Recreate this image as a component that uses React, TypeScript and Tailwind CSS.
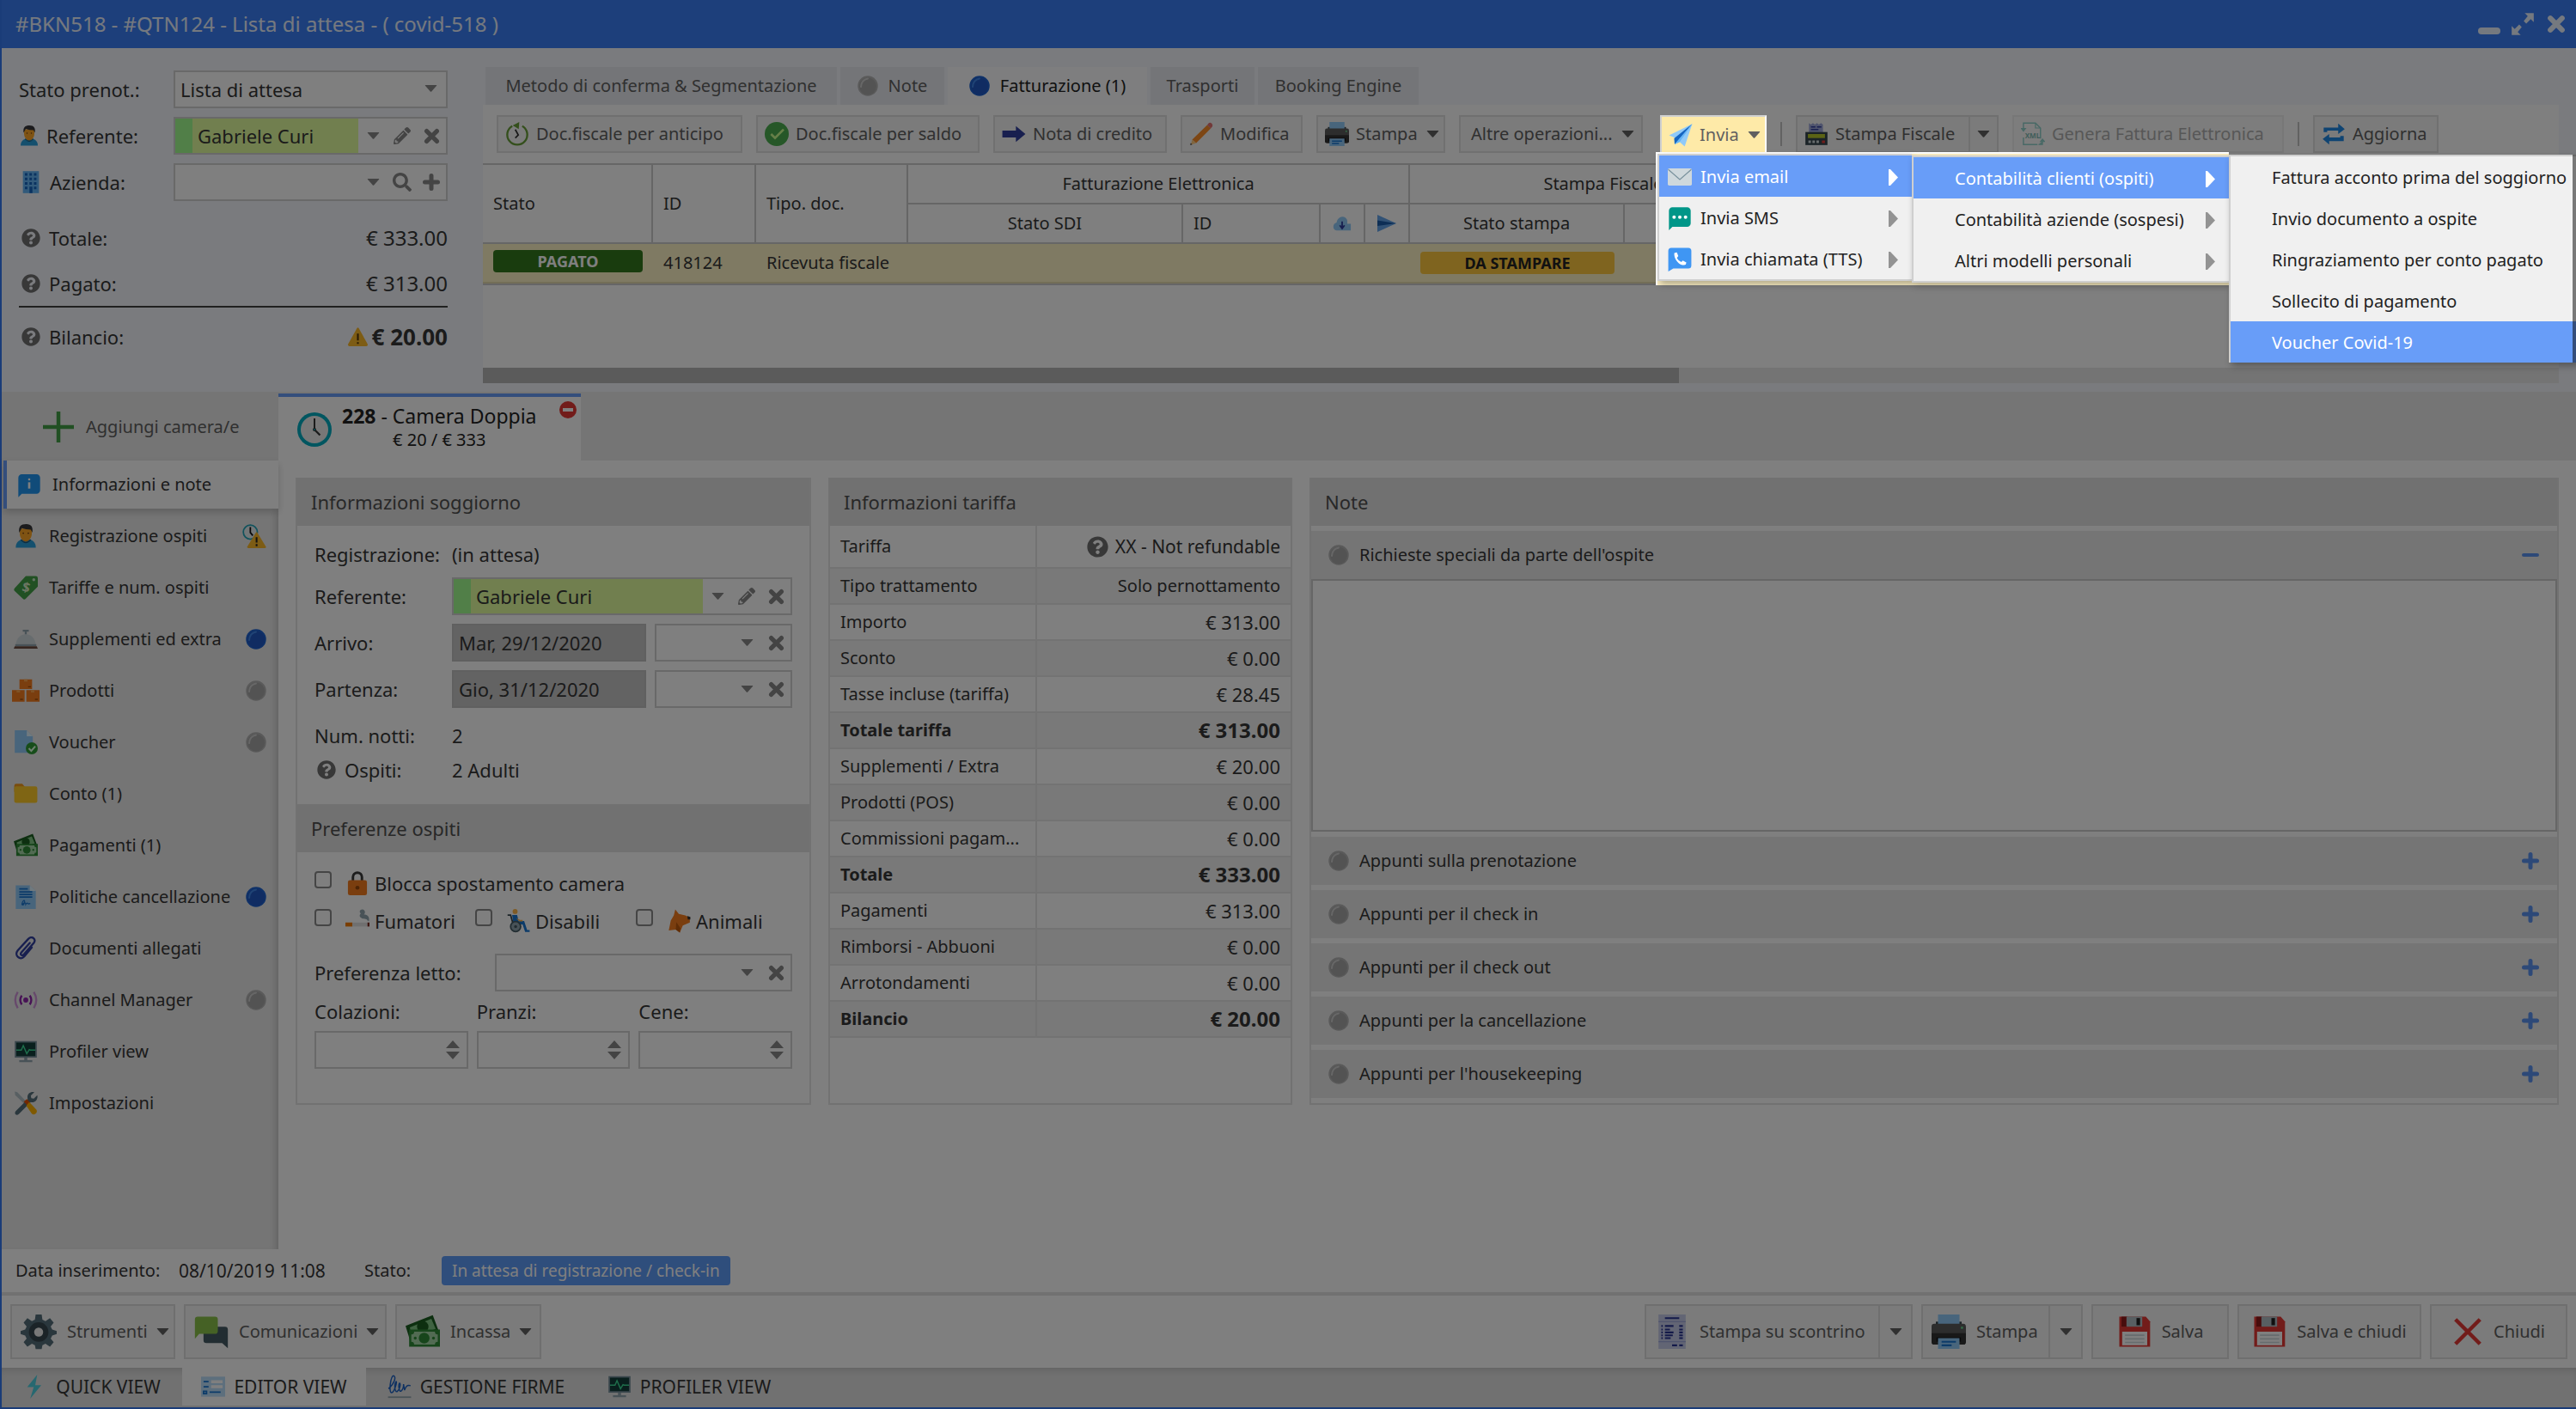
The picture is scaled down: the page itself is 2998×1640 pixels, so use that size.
import type { ReactNode } from 'react'
import clsx from 'clsx'
import { FaPencilAlt, FaQuestionCircle, FaSearch } from 'react-icons/fa'
import { FcAbout, FcClock, FcOk, FcSms } from 'react-icons/fc'

interface SvgProps {
  className?: string
  children: ReactNode
}

function Svg({ className = 'size-7', children }: SvgProps) {
  return (
    <svg viewBox="0 0 48 48" className={clsx('shrink-0', className)} aria-hidden="true">
      {children}
    </svg>
  )
}

interface IconProps {
  className?: string
}

function Caret({ className = 'text-[#606060]' }: IconProps) {
  return (
    <svg viewBox="0 0 16 9" className={clsx('h-[8px] w-[15px] shrink-0', className)} aria-hidden="true">
      <path d="M1 0h14q1 0 .4 .8L8.8 8.3q-.8 .8-1.600 0L.6 .8Q0 0 1 0z" fill="currentColor" />
    </svg>
  )
}

function Spinner() {
  return (
    <svg viewBox="0 0 16 22" className="h-[22px] w-4 shrink-0 text-[#888]" aria-hidden="true">
      <path d="M8 0l8 9H0zM0 13h16l-8 9z" fill="currentColor" />
    </svg>
  )
}

function TimesIcon({ className = 'size-[19px]' }: IconProps) {
  return (
    <Svg className={className}>
      <path d="M9 9l30 30M39 9L9 39" stroke="currentColor" strokeWidth="13" strokeLinecap="round" />
    </Svg>
  )
}

function PlusIcon({ className = 'size-5' }: IconProps) {
  return (
    <Svg className={className}>
      <path d="M24 6v36M6 24h36" stroke="currentColor" strokeWidth="12" strokeLinecap="round" />
    </Svg>
  )
}

function MinusIcon({ className = 'size-5' }: IconProps) {
  return (
    <Svg className={className}>
      <path d="M5 24h38" stroke="currentColor" strokeWidth="10" strokeLinecap="round" />
    </Svg>
  )
}

function Dot({ active, className = 'size-6' }: { active?: boolean; className?: string }) {
  return (
    <Svg className={className}>
      <circle cx="24" cy="24" r="23.500" fill={active ? '#1e62d0' : '#b4b4b4'} />
      <circle cx="24" cy="25" r="20" fill={active ? '#2159c4' : '#a6a6a6'} />
      <path d="M8 26Q9 10 24 7" stroke={active ? '#3f87ea' : '#cfcfcf'} strokeWidth="4" strokeLinecap="round" fill="none" />
    </Svg>
  )
}

function UserIcon({ className }: IconProps) {
  return (
    <Svg className={className}>
      <path d="M4 47c0-11 7-15 13-16h14c6 1 13 5 13 16z" fill="#2ba0dc" />
      <path d="M16 30q8 10 16 0l-2-5H18z" fill="#f57c00" />
      <path d="M14 31q10 12 20 0" stroke="#1d5b80" strokeWidth="2" fill="none" />
      <path d="M12 9h24v10c0 8-5 15-12 15s-12-7-12-15z" fill="#ffa726" />
      <path d="M11 17C9 5 14 0 25 0c10 0 14 6 12 17l-3-6q-10 0-18-3z" fill="#37373a" />
      <circle cx="19" cy="18" r="1.500" fill="#6b3b12" />
      <circle cx="29" cy="18" r="1.500" fill="#6b3b12" />
    </Svg>
  )
}

function BuildingIcon() {
  return (
    <Svg>
      <path d="M8 2h32v44H8z" fill="#64b5f6" />
      <path d="M12 6h5v5h-5zm9 0h5v5h-5zm9 0h5v5h-5zM12 15h5v5h-5zm9 0h5v5h-5zm9 0h5v5h-5zM12 24h5v5h-5zm9 0h5v5h-5zm9 0h5v5h-5zM12 33h5v5h-5zm18 0h5v5h-5zm-9 0h6v13h-6z" fill="#1565c0" />
    </Svg>
  )
}

function WarningIcon({ className }: IconProps) {
  return (
    <Svg className={className}>
      <path d="M22 4q2-3 4 0l20 36q1 4-3 4H5q-4 0-3-4z" fill="#fbb829" />
      <path d="M24 16v15M24 35v4" stroke="#4e3308" strokeWidth="4" />
    </Svg>
  )
}

function GuestClockIcon() {
  return (
    <Svg className="size-7">
      <circle cx="16" cy="16" r="14" fill="#e6eef0" stroke="#22a5b8" strokeWidth="3" />
      <path d="M16 6v11l5 6" stroke="#111" strokeWidth="3" fill="none" />
      <path d="M27 17q1.500-2 3 0l17 28q1 3-2 3H12q-3 0-2-3z" fill="#fbb829" />
      <path d="M28.500 26v11M28.500 40v4" stroke="#222" strokeWidth="3.500" />
    </Svg>
  )
}

function TagIcon() {
  return (
    <Svg>
      <path d="M24 1h20q4 0 4 4v17L24 46q-3 3-6 0L2 31q-3-3 0-6z" fill="#43a047" />
      <circle cx="40" cy="8" r="3" fill="#c8e6c9" />
      <text x="17" y="33" fontSize="27" fontWeight="bold" fill="#dcedc8" transform="rotate(14 24 24)">$</text>
    </Svg>
  )
}

function BellIcon() {
  return (
    <Svg>
      <path d="M18 5h12v4h-4v6h-4V9h-4z" fill="#90a4ae" />
      <path d="M4 36C5 21 14 14 24 14s19 7 20 22z" fill="#cfd8dc" />
      <path d="M3 34h42v4H3z" fill="#90a4ae" />
      <path d="M2 38h44l2 5H0z" fill="#6d4c41" />
    </Svg>
  )
}

function BoxesIcon() {
  return (
    <Svg className="size-8">
      <path d="M13 4h22v17H13zM0 23h22v20H0zm25 0h23v20H25z" fill="#f57c1f" />
      <path d="M21 4h6v4h-6zM8 23h6v4H8zm25 0h6v4h-6z" fill="#ffa74f" />
      <path d="M28 16h5v2h-5zM14 38h5v2h-5zm26 0h5v2h-5z" fill="#a34f0b" />
    </Svg>
  )
}

function VoucherIcon() {
  return (
    <Svg>
      <path d="M2 0h24l12 12v33H2z" fill="#90caf9" />
      <path d="M26 0l12 12H26z" fill="#e1f5fe" />
      <circle cx="36" cy="36" r="12" fill="#2e9b34" />
      <path d="M30 36l5 5 8-9" stroke="#dcffe0" strokeWidth="3.500" fill="none" />
    </Svg>
  )
}

function FolderIcon() {
  return (
    <Svg>
      <path d="M1 20V8q0-4 4-4h12l5 6v10z" fill="#f29a1d" />
      <rect x="1" y="9" width="46" height="33" rx="4" fill="#ffca28" />
    </Svg>
  )
}

function CashIcon({ className }: IconProps) {
  return (
    <Svg className={className}>
      <path d="M0 16L38 1l9 24L8 42z" fill="#1b5e20" />
      <path d="M6 18l30-12 6 14L9 32z" fill="#81c784" />
      <circle cx="24" cy="17" r="8" fill="#1b5e20" />
      <path d="M5 21h43v24H5z" fill="#2e8b36" />
      <path d="M12 24h29q0 4 4 4v10q-4 0-4 4H12q0-4-4-4V28q4 0 4-4z" fill="#a5d6a7" />
      <circle cx="26" cy="33" r="7.500" fill="#2e8b36" />
      <circle cx="13.500" cy="33" r="2" fill="#2e8b36" />
      <circle cx="39" cy="33" r="2" fill="#2e8b36" />
    </Svg>
  )
}

function PolicyIcon() {
  return (
    <Svg>
      <path d="M4 1h28l12 11v36H4z" fill="#90caf9" />
      <path d="M32 1l12 11H32z" fill="#e1f5fe" />
      <path d="M11 8h17M11 14h26M11 19h26M11 24h26" stroke="#1976d2" strokeWidth="3" />
      <path d="M16 40c2-12 8-11 5-3-2 5-5 3-3 1 4-4 6-3 6 1 3-5 4-2 5-1l4-1" stroke="#1976d2" strokeWidth="2" fill="none" />
    </Svg>
  )
}

function ClipIcon() {
  return (
    <Svg>
      <path d="M32 13L15 32c-3 4 2 8 5 4l20-23c6-8-4-15-11-8L8 28c-8 10 5 21 13 12l15-18" stroke="#303f9f" strokeWidth="4" strokeLinecap="round" fill="none" />
    </Svg>
  )
}

function ChannelIcon() {
  return (
    <Svg>
      <circle cx="24" cy="24" r="5" fill="#8e24aa" />
      <path d="M16 15q-6 9 0 18M32 15q6 9 0 18" stroke="#8e24aa" strokeWidth="4" fill="none" />
      <path d="M8 8q-10 16 0 32M40 8q10 16 0 32" stroke="#ce93d8" strokeWidth="4" fill="none" />
    </Svg>
  )
}

function MonitorIcon() {
  return (
    <Svg>
      <path d="M2 3h44v33H2z" fill="#78909c" />
      <path d="M5 6h38v27H5z" fill="#123f3a" />
      <path d="M5 21h10l4-9 7 16 5-8 2 1h10" stroke="#3ddc97" strokeWidth="2.500" fill="none" />
      <path d="M21 36h6v5h10v4H11v-4h10z" fill="#90a4ae" />
    </Svg>
  )
}

function ToolsIcon() {
  return (
    <Svg>
      <path d="M2 1l5 1 19 20-4 4L3 8z" fill="#b0bec5" />
      <path d="M4 40l24-24C25 6 33 0 41 2l-7 7 1 5 5 1 7-7c2 9-5 16-13 14L10 46c-5 4-10-1-6-6z" fill="#546e7a" />
      <path d="M20 21l6-5 7 7-5 6z" fill="#e65100" />
      <path d="M25 29l6-7 14 15c4 6-4 13-9 8z" fill="#ffb300" />
    </Svg>
  )
}

function GearIcon() {
  return (
    <Svg className="size-[42px]">
      <path
        d="M20 1h8l1 7 4 2 6-4 5 6-4 5 2 4 6 2v4l-6 2-2 4 4 5-5 6-6-4-4 2-1 5h-8l-1-5-4-2-6 4-5-6 4-5-2-4-6-2v-4l6-2 2-4-4-5 5-6 6 4 4-2z"
        fill="#546e7a"
      />
      <circle cx="24" cy="24.500" r="13" fill="#37474f" />
      <circle cx="24" cy="24.500" r="6" fill="#f0f0f0" />
    </Svg>
  )
}

function PrinterIcon({ className }: IconProps) {
  return (
    <Svg className={className}>
      <path d="M6 10h36v10H6z" fill="#37474f" />
      <path d="M9 0h30v15H9z" fill="#90caf9" />
      <path d="M4 13h40q4 0 4 4v21q0 4-4 4H4q-4 0-4-4V17q0-4 4-4z" fill="#5a5a5a" />
      <path d="M0 26h48v12q0 4-4 4H4q-4 0-4-4z" fill="#333" />
      <path d="M7 32h34v6H7z" fill="#111" />
      <path d="M9 33h30v15H9z" fill="#90caf9" />
      <path d="M14 38h20M14 43h14" stroke="#1976d2" strokeWidth="2.500" />
      <path d="M41 17h3v3h-3z" fill="#66d38a" />
    </Svg>
  )
}

function RestoreClockIcon() {
  return (
    <Svg>
      <path d="M14 8a20 20 0 1 0 20 0" stroke="#689f38" strokeWidth="4" fill="none" />
      <path d="M15 7l13-7-1 14z" fill="#689f38" />
      <path d="M20 15l6 11-6 6" stroke="#333" strokeWidth="3" fill="none" />
    </Svg>
  )
}

function ArrowIcon() {
  return (
    <Svg>
      <path d="M1 17h27V8l19 16-19 16v-9H1z" fill="#303f9f" />
    </Svg>
  )
}

function PencilIcon() {
  return (
    <Svg>
      <path d="M36 6l7 7-29 29-8-7z" fill="#fb8c28" />
      <path d="M36 6l3-4q3-2 6 1t1 6l-3 4z" fill="#e57373" />
      <path d="M6 35l8 7-11 4z" fill="#ffcc80" />
      <path d="M3 42l3 3-4 1z" fill="#333" />
    </Svg>
  )
}

function PlaneIcon() {
  return (
    <Svg>
      <path d="M1 25L47 2 32 47l-10-9-10 5 1-13z" fill="#90caf9" />
      <path d="M47 2L11 31l1 12z" fill="#1565c0" />
      <path d="M47 2L12 43l10-5z" fill="#64b5f6" />
    </Svg>
  )
}

function FiscalIcon() {
  return (
    <Svg>
      <path d="M9 2l4 3 4-3 4 3 4-3 4 3 4-3 4 3v18H9z" fill="#9fa8da" />
      <path d="M13 10h9M25 10h9M13 15h15" stroke="#303f9f" strokeWidth="2.500" />
      <path d="M2 20h44v26H2z" fill="#37474f" />
      <path d="M7 24h34v8H7z" fill="#b8c92a" />
      <path d="M8 37h5v5H8zm8 0h5v5h-5zm8 0h5v5h-5z" fill="#cfd8dc" />
      <path d="M35 37h6v5h-6z" fill="#e53935" />
    </Svg>
  )
}

function XmlIcon() {
  return (
    <Svg>
      <path d="M5 18V2h24l10 10v21M5 31v14h28" stroke="#26a69a" strokeWidth="2.500" fill="none" />
      <path d="M29 2v10h10" stroke="#26a69a" strokeWidth="2" fill="none" />
      <path d="M1 13l4 5 4-5zM39 39l4-5 4 5zM43 38v7h-8" stroke="#26a69a" strokeWidth="2" fill="#26a69a" />
      <text x="8" y="32" fontSize="14" fontWeight="bold" fill="#00796b">XML</text>
    </Svg>
  )
}

function RefreshIcon() {
  return (
    <Svg>
      <path d="M4 20V11h29V3l13 11-13 10v-7H11v3z" fill="#1e88e5" />
      <path d="M44 28v10H15v7L2 34l13-10v7h22v-3z" fill="#1e88e5" />
    </Svg>
  )
}

function CloudIcon() {
  return (
    <Svg className="size-[22px]">
      <path d="M10 42C-2 40 0 24 10 22 12 4 34 2 37 17v8h9v17z" fill="#90caf9" />
      <path d="M24 19v16M18 29l6 8 6-8" stroke="#303f9f" strokeWidth="4" fill="none" />
    </Svg>
  )
}

function SendIcon() {
  return (
    <Svg className="size-6">
      <path d="M2 4l44 20L2 44z" fill="#64a5ea" />
      <path d="M2 17l44 7-44 6z" fill="#1a5cab" />
    </Svg>
  )
}

function EnvelopeIcon() {
  return (
    <Svg>
      <rect x="0" y="7" width="48" height="34" rx="3" fill="#cfd8dc" />
      <path d="M1 9l23 20L47 9" stroke="#78909c" strokeWidth="2" fill="none" />
    </Svg>
  )
}

function CallIcon() {
  return (
    <Svg>
      <path d="M37 42H11l-10 6V7q0-6 6-6h34q6 0 6 6v29q0 6-6 6z" fill="#3f96f3" />
      <path d="M13 11l5-1 3 7-3 4q3 6 9 8l3-3 7 4-1 4q-2 2-7 1C19 32 12 21 13 11z" fill="#fff" />
    </Svg>
  )
}

function LockIcon() {
  return (
    <Svg>
      <path d="M15 20v-8c0-12 18-12 18 0v8" stroke="#3b3b3b" strokeWidth="5" fill="none" />
      <rect x="5" y="18" width="38" height="30" rx="4" fill="#f57c1f" />
      <circle cx="24" cy="33" r="4" fill="#9a4a0b" />
    </Svg>
  )
}

function SmokeIcon() {
  return (
    <Svg>
      <path d="M0 27h14v8H0z" fill="#f57c00" />
      <path d="M14 27h30v8H14z" fill="#e0e0e0" />
      <path d="M44 27h4v8h-4z" fill="#7a2d22" />
      <path d="M30 2c7-4 12 4 7 9 9 0 11 6 10 13l-3-1c-1-5-9-2-12-5-6-3-3-8-1-9-3-2-3-5-1-7z" fill="#90a4ae" />
    </Svg>
  )
}

function WheelchairIcon() {
  return (
    <Svg>
      <circle cx="18" cy="5" r="5" fill="#ffb74d" />
      <path d="M12 12h10l3 12h11l6 18h5v4h-9l-5-15H15z" fill="#1976d2" />
      <path d="M3 12h6l5 18" stroke="#37474f" strokeWidth="3" fill="none" />
      <circle cx="19" cy="35" r="10" stroke="#455a64" strokeWidth="3" fill="#90a4ae" />
      <circle cx="19" cy="35" r="3" fill="#455a64" />
      <path d="M20 18l8 4h5v3h-7z" fill="#ffb74d" />
    </Svg>
  )
}

function DogIcon() {
  return (
    <Svg>
      <path d="M17 1l7 9 13 3 9 4v10l-14 6-6 14-8-6-14 2 4-20 6-10z" fill="#f57c1f" />
      <path d="M19 26l8 12-1 9-8-6z" fill="#bf5a0c" />
      <path d="M41 14l6 2v5h-5z" fill="#333" />
    </Svg>
  )
}

function CommentsIcon() {
  return (
    <Svg className="size-10">
      <path d="M17 17h26q4 0 4 4v26l-8-7H17q-4 0-4-4V21q0-4 4-4z" fill="#455a64" />
      <path d="M5 3h24q4 0 4 4v16q0 4-4 4H7l-6 7V7q0-4 4-4z" fill="#8bc34a" />
    </Svg>
  )
}

function ReceiptIcon() {
  return (
    <Svg className="size-10">
      <path d="M5 0h38v48H5z" fill="#c5cae9" />
      <path d="M5 10h38M5 38h38" stroke="#9fa8da" strokeWidth="1.500" />
      <path d="M14 5h20M9 16h2M14 16h12M9 21h2M14 21h7M9 25h2M14 25h12M9 29h2M14 29h11M9 33h2M14 33h8M34 16h5M34 21h5M34 25h5M34 29h5M34 33h5M24 43h7M34 43h5" stroke="#283593" strokeWidth="2.500" />
    </Svg>
  )
}

function DiskIcon() {
  return (
    <Svg className="size-10">
      <path d="M3 3h37l6 7v35H3z" fill="#e53935" />
      <path d="M6 3h8v14H6z" fill="#8e1b1b" />
      <path d="M13 3h22v14H13z" fill="#b0bec5" />
      <path d="M27 5h5v10h-5z" fill="#212121" />
      <path d="M7 24h35v19H7z" fill="#fff" />
      <path d="M11 29h27M11 34h27M11 39h27" stroke="#cfd8dc" strokeWidth="2" />
    </Svg>
  )
}

function CrossIcon() {
  return (
    <Svg className="size-9">
      <path d="M5 5l38 38M43 5L5 43" stroke="#e53935" strokeWidth="6" />
    </Svg>
  )
}

function FlashIcon() {
  return (
    <Svg>
      <path d="M28 0L8 25h13l-7 23 22-27H24z" fill="#4dd0e1" />
    </Svg>
  )
}

function EditorIcon() {
  return (
    <Svg>
      <path d="M0 4h48v40H0z" fill="#bbdefb" />
      <path d="M5 14h10M5 24h10M5 33h6v5H5zM17 35h22" stroke="#1976d2" strokeWidth="3" fill="none" />
      <path d="M20 11h23v6H20zm0 10h23v6H20z" fill="#fff" />
    </Svg>
  )
}

function SignIcon() {
  return (
    <Svg>
      <path d="M2 28C14 18 18 4 12 2 6 3 2 36 8 36c6-1 12-24 9-22-4 5-3 21 2 20 5-3 8-16 5-17-3 3-1 18 3 16 4-3 5-11 5-14l2 12c2-6 4-11 12-9" stroke="#1e63c4" strokeWidth="2.500" fill="none" />
      <path d="M1 45h46" stroke="#90a4ae" strokeWidth="3" />
    </Svg>
  )
}

interface FieldProps {
  id: string
  label: string
  value?: string
  className?: string
  children?: ReactNode
}

function ComboField({ id, label, value = '', className, children }: FieldProps) {
  return (
    <div className={clsx('flex h-11 min-w-0 items-center border-2 border-[#d2d2d2] bg-white', className)}>
      {value && <span className="h-full w-5 shrink-0 bg-[#a2ff90]" />}
      <input
        id={id}
        aria-label={label}
        defaultValue={value}
        className={clsx('h-full w-0 min-w-0 flex-1 px-1.5 outline-none', value && 'bg-[#e2ff9e]')}
      />
      {children}
    </div>
  )
}

function FieldButton({ label, className, children }: { label: string; className?: string; children: ReactNode }) {
  return (
    <button aria-label={label} className={clsx('flex h-full items-center justify-center text-[20px] text-[#888]', className ?? 'w-[34px]')}>
      {children}
    </button>
  )
}

function Help() {
  return <FaQuestionCircle className="size-[22px] shrink-0 text-[#707070]" />
}

const amounts = [
  { label: 'Totale:', value: '€ 333.00' },
  { label: 'Pagato:', value: '€ 313.00' },
]

function BookingSummary() {
  return (
    <div className="w-[560px] shrink-0 pt-[26px] pr-[41px] pl-5 text-[22px] leading-7">
      <div className="flex flex-col gap-2.5">
        <div className="flex h-11 items-center">
          <label htmlFor="stato" className="w-[180px]">Stato prenot.:</label>
          <div className="relative flex-1">
            <select id="stato" className="h-11 w-full appearance-none border-2 border-[#d2d2d2] bg-white pl-1.5">
              <option>Lista di attesa</option>
            </select>
            <Caret className="pointer-events-none absolute top-[17px] right-3 text-[#888]" />
          </div>
        </div>
        <div className="flex h-11 items-center">
          <label htmlFor="referente" className="flex w-[180px] items-center gap-2">
            <UserIcon className="size-6" />Referente:
          </label>
          <ComboField id="referente" label="Referente" value="Gabriele Curi" className="flex-1">
            <FieldButton label="Apri elenco"><Caret className="text-[#888]" /></FieldButton>
            <FieldButton label="Modifica"><FaPencilAlt /></FieldButton>
            <FieldButton label="Rimuovi"><TimesIcon /></FieldButton>
          </ComboField>
        </div>
        <div className="flex h-11 items-center">
          <label htmlFor="azienda" className="flex w-[180px] items-center gap-2">
            <BuildingIcon />Azienda:
          </label>
          <ComboField id="azienda" label="Azienda" className="flex-1">
            <FieldButton label="Apri elenco"><Caret className="text-[#888]" /></FieldButton>
            <FieldButton label="Cerca"><FaSearch className="size-[22px]" /></FieldButton>
            <FieldButton label="Aggiungi"><PlusIcon /></FieldButton>
          </ComboField>
        </div>
      </div>
      <div className="mt-4 border-b-2 border-[#404040]">
        {amounts.map((row) => (
          <div key={row.label} className="flex h-[53px] items-center gap-2.5 pl-[3px]">
            <Help />
            <span className="flex-1">{row.label}</span>
            <span className="text-[24px]">{row.value}</span>
          </div>
        ))}
      </div>
      <div className="flex h-[68px] items-center pl-[3px]">
        <Help />
        <span className="ml-2.5 flex-1">Bilancio:</span>
        <WarningIcon className="mr-1 size-[25px]" />
        <strong className="text-[26px]">€ 20.00</strong>
      </div>
    </div>
  )
}

const headerTabs = [
  { label: 'Metodo di conferma & Segmentazione', width: 'w-[409px]' },
  { label: 'Note', width: 'w-[121px]', dot: true },
  { label: 'Fatturazione (1)', width: 'w-[232px]', dot: true, active: true },
  { label: 'Trasporti', width: 'w-[121px]' },
  { label: 'Booking Engine', width: 'w-[187px]' },
]

interface ToolButtonProps {
  label: string
  width: string
  icon?: ReactNode
  caret?: boolean
  disabled?: boolean
}

function ToolButton({ label, width, icon, caret, disabled }: ToolButtonProps) {
  return (
    <button
      disabled={disabled}
      className={clsx(
        'flex h-11 items-center border-2 border-[#e0e0e0] bg-[#f6f6f6] px-2 whitespace-nowrap text-[#606060] disabled:opacity-50',
        width,
      )}
    >
      {icon && <span className="mr-2 flex w-7 shrink-0 items-center justify-center">{icon}</span>}
      <span className={clsx(!icon && 'pl-1')}>{label}</span>
      {caret && <Caret className="ml-2.5 text-[#606060]" />}
    </button>
  )
}

function Separator() {
  return <span className="h-7 w-[2px] bg-[#c4c4c4]" />
}

const sendMenu = [
  { label: 'Invia email', icon: <EnvelopeIcon />, active: true },
  { label: 'Invia SMS', icon: <FcSms className="size-8" /> },
  { label: 'Invia chiamata (TTS)', icon: <CallIcon /> },
]
const emailMenu = [
  { label: 'Contabilità clienti (ospiti)', active: true },
  { label: 'Contabilità aziende (sospesi)' },
  { label: 'Altri modelli personali' },
]
const modelMenu = [
  { label: 'Fattura acconto prima del soggiorno' },
  { label: 'Invio documento a ospite' },
  { label: 'Ringraziamento per conto pagato' },
  { label: 'Sollecito di pagamento' },
  { label: 'Voucher Covid-19', active: true },
]

interface MenuEntry {
  label: string
  icon?: ReactNode
  active?: boolean
}

function Menu({ items, submenu, className }: { items: MenuEntry[]; submenu?: boolean; className: string }) {
  return (
    <div role="menu" className={clsx('shrink-0 border-[#cfcfcf] bg-[#f0f0f0] shadow-[3px_4px_8px_rgba(0,0,0,0.3)]', className)}>
      {items.map((item) => (
        <button
          key={item.label}
          role="menuitem"
          className={clsx(
            'flex h-12 w-full items-center pt-[2px] pr-4 whitespace-nowrap',
            item.icon ? 'pl-2' : 'pl-12',
            item.active ? 'bg-[#689df8] text-white' : 'text-[#222]',
          )}
        >
          {item.icon && <span className="mr-2 flex w-8 items-center justify-center">{item.icon}</span>}
          <span>{item.label}</span>
          {submenu && (
            <svg viewBox="0 0 11 19" className={clsx('ml-auto h-[19px] w-[11px]', item.active ? 'text-white' : 'text-[#939393]')} aria-hidden="true">
              <path d="M0 0l2 0 9 9.500-9 9.500H0z" fill="currentColor" />
            </svg>
          )}
        </button>
      ))}
    </div>
  )
}

function SendButton() {
  return (
    <div className="relative z-20 ml-1">
      <button className="flex h-11 w-[124px] items-center border-2 border-[#d0d0d0] border-r-white border-b-0 bg-[#feeaa8] px-2 text-[#606060]">
        <span className="mr-2"><PlaneIcon /></span>
        Invia
        <Caret className="ml-2.5" />
      </button>
      {/* open menu chain, kept above the page mask */}
      <div className="absolute top-[43px] left-[-5px] flex w-max items-start">
        <div className="flex items-start border-t-2 border-l-2 border-white bg-[#fdf0c4] pb-[3px]">
          <Menu items={sendMenu} submenu className="z-0 w-[296px] border-t-2 border-b-2 border-l-2" />
          <Menu items={emailMenu} submenu className="z-10 mt-[2px] w-[369px] border-t-2 border-b-2 border-l-2" />
        </div>
        <div className="relative z-20 mt-[3px]">
          <Menu items={modelMenu} className="w-[405px] border-t-2 border-l-2" />
          <span className="absolute inset-y-0 right-0 w-[5px] bg-black/50" />
        </div>
      </div>
    </div>
  )
}

function InvoiceTable() {
  const th = 'border-r-2 border-[#cdcdcd] font-normal'
  return (
    <table className="w-full table-fixed border-separate border-spacing-0 border-y-2 border-[#cdcdcd] text-left">
      <colgroup>
        <col className="w-[198px]" />
        <col className="w-[120px]" />
        <col className="w-[177px]" />
        <col className="w-[320px]" />
        <col className="w-[160px]" />
        <col className="w-[52px]" />
        <col className="w-[52px]" />
        <col className="w-[250px]" />
        <col className="w-[202px]" />
        <col />
      </colgroup>
      <thead>
        <tr className="h-[46px]">
          <th rowSpan={2} className={clsx(th, 'pl-3')}>Stato</th>
          <th rowSpan={2} className={clsx(th, 'pl-3')}>ID</th>
          <th rowSpan={2} className={clsx(th, 'pl-3')}>Tipo. doc.</th>
          <th colSpan={4} className={clsx(th, 'border-b-2 text-center')}>Fatturazione Elettronica</th>
          <th colSpan={2} className={clsx(th, 'border-b-2 text-center')}>Stampa Fiscale</th>
          <th rowSpan={2} />
        </tr>
        <tr className="h-[44px]">
          <th className={clsx(th, 'text-center')}>Stato SDI</th>
          <th className={clsx(th, 'pl-3')}>ID</th>
          <th className={th} aria-label="Scarica"><span className="flex justify-center"><CloudIcon /></span></th>
          <th className={th} aria-label="Invia"><span className="flex justify-center"><SendIcon /></span></th>
          <th className={clsx(th, 'text-center')}>Stato stampa</th>
          <th className={th} />
        </tr>
      </thead>
      <tbody>
        <tr className="h-12 bg-[#fef4c6] *:border-t-2 *:border-t-[#cdcdcd] *:border-b-2 *:border-b-[#e6dcae]">
          <td className="px-3 pb-1">
            <span className="block h-[26px] rounded bg-[#32791c] text-center text-[18px] leading-[26px] font-bold text-white">PAGATO</span>
          </td>
          <td className="pl-3">418124</td>
          <td className="pl-3">Ricevuta fiscale</td>
          <td colSpan={4} />
          <td className="px-3">
            <span className="block h-[26px] rounded bg-[#ffc93e] text-center text-[18px] leading-[26px] font-bold text-[#222]">DA STAMPARE</span>
          </td>
          <td colSpan={2} />
        </tr>
      </tbody>
    </table>
  )
}

function InvoicePanel() {
  return (
    <div className="min-w-0 flex-1 pt-[22px]">
      <div role="tablist" className="flex gap-1 pl-[3px]">
        {headerTabs.map((tab) => (
          <button
            key={tab.label}
            role="tab"
            className={clsx(
              'flex h-11 items-center justify-center gap-3 whitespace-nowrap',
              tab.width,
              tab.active ? 'bg-[#fcfdff] text-[#222]' : 'bg-[#e9ebf1] text-[#606060]',
            )}
          >
            {tab.dot && <Dot active={tab.active} />}
            {tab.label}
          </button>
        ))}
      </div>
      <div className="bg-white">
        <div className="flex h-[68px] items-center gap-4 pl-4">
          <ToolButton label="Doc.fiscale per anticipo" icon={<RestoreClockIcon />} width="w-[286px]" />
          <ToolButton label="Doc.fiscale per saldo" icon={<FcOk className="size-8 shrink-0" />} width="w-[260px]" />
          <ToolButton label="Nota di credito" icon={<ArrowIcon />} width="w-[202px]" />
          <ToolButton label="Modifica" icon={<PencilIcon />} width="w-[142px]" />
          <ToolButton label="Stampa" icon={<PrinterIcon />} caret width="w-[150px]" />
          <ToolButton label="Altre operazioni..." caret width="w-[214px]" />
          <SendButton />
          <Separator />
          <div className="flex">
            <ToolButton label="Stampa Fiscale" icon={<FiscalIcon />} width="w-[203px]" />
            <button aria-label="Opzioni stampa fiscale" className="flex h-11 w-[33px] items-center justify-center border-2 border-l-0 border-[#e0e0e0] bg-[#f6f6f6]">
              <Caret />
            </button>
          </div>
          <ToolButton label="Genera Fattura Elettronica" icon={<XmlIcon />} disabled width="w-[316px]" />
          <Separator />
          <ToolButton label="Aggiorna" icon={<RefreshIcon />} width="w-[146px]" />
        </div>
        <InvoiceTable />
        <div className="mt-[96px] h-[18px] bg-[#e9e9e9]">
          <div className="h-full w-[1392px] bg-[#b6b6b6]" />
        </div>
      </div>
    </div>
  )
}

const navItems = [
  { label: 'Informazioni e note', icon: <FcAbout className="size-8" />, active: true },
  { label: 'Registrazione ospiti', icon: <UserIcon />, mark: <GuestClockIcon /> },
  { label: 'Tariffe e num. ospiti', icon: <TagIcon /> },
  { label: 'Supplementi ed extra', icon: <BellIcon />, mark: <Dot active /> },
  { label: 'Prodotti', icon: <BoxesIcon />, mark: <Dot /> },
  { label: 'Voucher', icon: <VoucherIcon />, mark: <Dot /> },
  { label: 'Conto (1)', icon: <FolderIcon /> },
  { label: 'Pagamenti (1)', icon: <CashIcon /> },
  { label: 'Politiche cancellazione', icon: <PolicyIcon />, mark: <Dot active /> },
  { label: 'Documenti allegati', icon: <ClipIcon /> },
  { label: 'Channel Manager', icon: <ChannelIcon />, mark: <Dot /> },
  { label: 'Profiler view', icon: <MonitorIcon /> },
  { label: 'Impostazioni', icon: <ToolsIcon /> },
]

function Sidebar() {
  return (
    <nav className="w-[322px] shrink-0 bg-[#eaeaea] shadow-[inset_-8px_0_8px_-6px_rgba(0,0,0,0.18)]">
      {navItems.map((item) => (
        <a
          key={item.label}
          href="#"
          className={clsx(
            'flex items-center whitespace-nowrap',
            item.active
              ? 'mb-[2px] ml-[2px] h-14 border-l-4 border-[#689df8] bg-white pl-2.5 shadow-[0_4px_8px_rgba(0,0,0,0.18)]'
              : 'h-[60px] pr-3.5 pl-3',
          )}
        >
          <span className="mr-[11px] flex w-8 items-center justify-center">{item.icon}</span>
          <span>{item.label}</span>
          {item.mark && <span className="ml-auto">{item.mark}</span>}
        </a>
      ))}
    </nav>
  )
}

function PanelTitle({ children }: { children: ReactNode }) {
  return <h2 className="flex h-14 items-center bg-[#e2e2e2] px-4 text-[22px] text-[#505050]">{children}</h2>
}

const preferences = [
  { id: 'fumatori', label: 'Fumatori', icon: <SmokeIcon /> },
  { id: 'disabili', label: 'Disabili', icon: <WheelchairIcon /> },
  { id: 'animali', label: 'Animali', icon: <DogIcon /> },
]

const stays = [
  { id: 'arrivo', label: 'Arrivo:', value: 'Mar, 29/12/2020' },
  { id: 'partenza', label: 'Partenza:', value: 'Gio, 31/12/2020' },
]

function CheckOption({ id, label, icon }: { id: string; label: string; icon: ReactNode }) {
  return (
    <div className="flex h-11 w-[187px] shrink-0 items-center whitespace-nowrap">
      <input id={id} type="checkbox" className="mb-2 size-5 shrink-0 appearance-none rounded-[4px] border-2 border-[#8a8a8a] bg-white" />
      <label htmlFor={id} className="flex items-center gap-1.5 pl-4">{icon}{label}</label>
    </div>
  )
}

function StayPanel() {
  return (
    <section className="w-[600px] shrink-0 border-2 border-t-0 border-[#e4e4e4] bg-white text-[22px]">
      <PanelTitle>Informazioni soggiorno</PanelTitle>
      <div className="px-5 pt-2.5 pb-5">
        <div className="mb-1 flex h-[46px] items-center">
          <span className="w-[160px]">Registrazione:</span>
          <span>(in attesa)</span>
        </div>
        <div className="flex flex-col gap-2.5">
          <div className="flex h-11 items-center">
            <label htmlFor="ospite" className="w-[160px]">Referente:</label>
            <ComboField id="ospite" label="Referente soggiorno" value="Gabriele Curi" className="flex-1">
              <FieldButton label="Apri elenco"><Caret className="text-[#888]" /></FieldButton>
              <FieldButton label="Modifica"><FaPencilAlt /></FieldButton>
              <FieldButton label="Rimuovi"><TimesIcon /></FieldButton>
            </ComboField>
          </div>
          {stays.map((stay) => (
            <div key={stay.id} className="flex h-11 items-center">
              <label htmlFor={stay.id} className="w-[160px]">{stay.label}</label>
              <input id={stay.id} readOnly defaultValue={stay.value} className="mr-2.5 h-11 w-[226px] border-2 border-[#c0c0c0] bg-[#c6c6c6] px-1.5" />
              <ComboField id={`${stay.id}-ora`} label={`${stay.label} ora`} className="flex-1">
                <FieldButton label="Apri elenco"><Caret className="text-[#888]" /></FieldButton>
                <FieldButton label="Rimuovi"><TimesIcon /></FieldButton>
              </ComboField>
            </div>
          ))}
        </div>
        <div className="mt-3 flex h-10 items-center">
          <span className="w-[160px]">Num. notti:</span>
          <span>2</span>
        </div>
        <div className="flex h-10 items-center">
          <span className="flex w-[160px] items-center gap-2.5 pl-[3px]"><Help />Ospiti:</span>
          <span>2 Adulti</span>
        </div>
      </div>
      <PanelTitle>Preferenze ospiti</PanelTitle>
      <div className="px-5 pt-3.5 pb-10">
        <CheckOption id="blocca" label="Blocca spostamento camera" icon={<LockIcon />} />
        <div className="flex">
          {preferences.map((option) => (
            <CheckOption key={option.id} {...option} />
          ))}
        </div>
        <div className="mt-4 flex h-11 items-center">
          <label htmlFor="letto" className="w-[210px]">Preferenza letto:</label>
          <ComboField id="letto" label="Preferenza letto" className="flex-1">
            <FieldButton label="Apri elenco"><Caret className="text-[#888]" /></FieldButton>
            <FieldButton label="Rimuovi"><TimesIcon /></FieldButton>
          </ComboField>
        </div>
        <div className="flex gap-2.5">
          {['Colazioni', 'Pranzi', 'Cene'].map((meal) => (
            <div key={meal} className="min-w-0 flex-1">
              <label htmlFor={meal} className="flex h-[46px] items-center">{meal}:</label>
              <div className="flex h-11 items-center border-2 border-[#d2d2d2] bg-white pr-2">
                <input id={meal} inputMode="numeric" className="h-full w-0 flex-1 px-1.5 outline-none" />
                <Spinner />
              </div>
            </div>
          ))}
        </div>
      </div>
    </section>
  )
}

const rates = [
  { label: 'Tipo trattamento', value: 'Solo pernottamento', plain: true },
  { label: 'Importo', value: '€ 313.00' },
  { label: 'Sconto', value: '€ 0.00' },
  { label: 'Tasse incluse (tariffa)', value: '€ 28.45' },
  { label: 'Totale tariffa', value: '€ 313.00', bold: true },
  { label: 'Supplementi / Extra', value: '€ 20.00' },
  { label: 'Prodotti (POS)', value: '€ 0.00' },
  { label: 'Commissioni pagam...', value: '€ 0.00' },
  { label: 'Totale', value: '€ 333.00', bold: true },
  { label: 'Pagamenti', value: '€ 313.00' },
  { label: 'Rimborsi - Abbuoni', value: '€ 0.00' },
  { label: 'Arrotondamenti', value: '€ 0.00' },
  { label: 'Bilancio', value: '€ 20.00', bold: true },
]

function RatePanel() {
  return (
    <section className="w-[540px] shrink-0 border-2 border-t-0 border-[#e4e4e4] bg-white">
      <PanelTitle>Informazioni tariffa</PanelTitle>
      <table className="w-full border-separate border-spacing-0 *:*:*:border-b-2 *:*:*:border-[#e6e6e6]">
        <tbody>
          <tr className="h-[50px]">
            <td className="w-[241px] border-r-2 pl-3">Tariffa</td>
            <td className="pr-3">
              <span className="flex items-center justify-end gap-2">
                <FaQuestionCircle className="size-[25px] text-[#707070]" />
                <span className="text-[21px]">XX - Not refundable</span>
              </span>
            </td>
          </tr>
          {rates.map((rate, index) => (
            <tr key={rate.label} className={clsx('h-[42px]', index % 2 === 0 && 'bg-[#f2f2f2]', rate.bold && 'font-bold')}>
              <td className="border-r-2 pl-3">{rate.label}</td>
              <td className={clsx('pr-3 text-right', !rate.plain && (rate.bold ? 'text-[24px]' : 'text-[22px]'))}>{rate.value}</td>
            </tr>
          ))}
        </tbody>
      </table>
    </section>
  )
}

const notes = [
  'Appunti sulla prenotazione',
  'Appunti per il check in',
  'Appunti per il check out',
  'Appunti per la cancellazione',
  "Appunti per l'housekeeping",
]

function NoteRow({ label, open }: { label: string; open?: boolean }) {
  return (
    <button className="flex h-14 w-full shrink-0 items-center bg-[#ebebeb] pr-[21px] pl-5 text-left">
      <Dot />
      <span className="flex-1 pl-3">{label}</span>
      {open ? <MinusIcon className="size-5 text-[#5b92f0]" /> : <PlusIcon className="size-5 text-[#5b92f0]" />}
    </button>
  )
}

function NotesPanel() {
  return (
    <section className="flex min-w-0 flex-1 flex-col border-2 border-t-0 border-[#e4e4e4] bg-white">
      <PanelTitle>Note</PanelTitle>
      <div className="flex flex-1 flex-col gap-1.5 py-1.5">
        <div className="flex flex-1 flex-col">
          <NoteRow label="Richieste speciali da parte dell'ospite" open />
          <textarea aria-label="Richieste speciali" className="block w-full flex-1 resize-none border-2 border-[#cdcdcd] bg-white p-2 outline-none" />
        </div>
        {notes.map((note) => (
          <NoteRow key={note} label={note} />
        ))}
      </div>
    </section>
  )
}

interface FooterButtonProps {
  label: string
  icon: ReactNode
  width: string
  caret?: boolean
  split?: boolean
  center?: boolean
}

function FooterButton({ label, icon, width, caret, split, center }: FooterButtonProps) {
  return (
    <div className="flex">
      <button className={clsx('flex h-16 items-center border-2 border-[#dedede] bg-[#f6f6f6] px-2.5 whitespace-nowrap text-[#606060]', center && 'justify-center', width)}>
        <span className="mr-3">{icon}</span>
        {label}
        {caret && <Caret className="ml-2.5 text-[#606060]" />}
      </button>
      {split && (
        <button aria-label={`Opzioni ${label}`} className="flex h-16 w-[38px] items-center justify-center border-2 border-l-0 border-[#dedede] bg-[#f6f6f6]">
          <Caret />
        </button>
      )}
    </div>
  )
}

const viewTabs = [
  { label: 'QUICK VIEW', icon: <FlashIcon />, width: 'w-[210px]' },
  { label: 'EDITOR VIEW', icon: <EditorIcon />, width: 'w-[214px]', active: true },
  { label: 'GESTIONE FIRME', icon: <SignIcon />, width: 'w-[256px]' },
  { label: 'PROFILER VIEW', icon: <MonitorIcon />, width: 'w-[240px]' },
]

export default function App() {
  return (
    <div
      className="relative overflow-hidden text-[20px] leading-6 text-[#363636]"
      style={{ fontFamily: '"Noto Sans", sans-serif' }}
    >
      <div className="flex min-h-screen flex-col border-b-2 border-l-2 border-[#3478f0] bg-white">
        <header className="flex h-14 items-center bg-[#3a7ef6] pr-3 pl-4 text-white/90">
          <h1 className="flex-1 text-[24px]">#BKN518 - #QTN124 - Lista di attesa - ( covid-518 )</h1>
          <button aria-label="Riduci" className="mt-4 mr-3 h-2 w-[26px] rounded-sm bg-current" />
          <button aria-label="Ingrandisci" className="mr-3.5">
            <Svg>
              <path d="M28 2h18v18l-6-6-9 9-5-5 8-10zM2 28l6 6 9-9 5 5-8 10 6 6H2z" fill="currentColor" />
            </Svg>
          </button>
          <button aria-label="Chiudi finestra"><TimesIcon className="size-[22px]" /></button>
        </header>

        <div className="flex h-[400px] bg-[#f4f6fd] pr-5">
          <BookingSummary />
          <InvoicePanel />
        </div>

        <div className="flex h-20 bg-[#eaeaea]">
          <button className="flex w-[322px] items-center gap-3.5 pt-[2px] pl-12 text-[#606060]">
            <Svg className="size-9">
              <path d="M21 0h6v21h21v6H27v21h-6V27H0v-6h21z" fill="#43a047" />
            </Svg>
            Aggiungi camera/e
          </button>
          <div className="relative mt-[2px] flex w-[352px] border-t-4 border-[#689df8] bg-white">
            <FcClock className="mt-3.5 ml-[18px] size-12 shrink-0" />
            <button className="mt-2 ml-2 flex flex-col items-center text-[#222]">
              <span className="text-[23px] leading-7"><b>228</b> - Camera Doppia</span>
              <span className="leading-7">€ 20 / € 333</span>
            </button>
            <button aria-label="Rimuovi camera" className="absolute top-[5px] right-[5px] flex size-5 items-center justify-center rounded-full bg-[#e53935]">
              <span className="h-1 w-3 bg-white" />
            </button>
          </div>
        </div>

        <div className="flex flex-1">
          <Sidebar />
          <main className="flex min-w-0 flex-1 items-start pt-5 pr-5 pl-5">
            <div className="flex min-w-0 flex-1 items-stretch gap-5">
              <StayPanel />
              <RatePanel />
              <NotesPanel />
            </div>
          </main>
        </div>

        <div className="flex h-[50px] items-center pl-4">
          <span className="w-[190px]">Data inserimento:</span>
          <span className="w-[216px] text-[21px]">08/10/2019 11:08</span>
          <span className="w-[90px]">Stato:</span>
          <span className="flex h-[34px] items-center rounded bg-[#5f9cf8] px-3 text-[19px] text-white">In attesa di registrazione / check-in</span>
        </div>

        <div className="flex items-center gap-2.5 border-t-4 border-[#e2e2e2] px-2.5 py-2.5">
          <FooterButton label="Strumenti" icon={<GearIcon />} caret width="w-[192px]" />
          <FooterButton label="Comunicazioni" icon={<CommentsIcon />} caret width="w-[236px]" />
          <FooterButton label="Incassa" icon={<CashIcon className="size-10" />} caret width="w-[170px]" />
          <span className="flex-1" />
          <FooterButton label="Stampa su scontrino" icon={<ReceiptIcon />} split width="w-[274px]" />
          <FooterButton label="Stampa" icon={<PrinterIcon className="size-10" />} split width="w-[150px]" />
          <FooterButton label="Salva" icon={<DiskIcon />} center width="w-[160px]" />
          <FooterButton label="Salva e chiudi" icon={<DiskIcon />} center width="w-[214px]" />
          <FooterButton label="Chiudi" icon={<CrossIcon />} center width="w-[160px]" />
        </div>

        <div role="tablist" className="flex h-[46px] bg-[#e2e2e2] shadow-[inset_0_6px_8px_-4px_rgba(0,0,0,0.15)]">
          {viewTabs.map((tab) => (
            <button key={tab.label} role="tab" className={clsx('flex h-11 items-center justify-center gap-2.5 text-[21px] whitespace-nowrap', tab.width, tab.active && 'bg-white')}>
              {tab.icon}
              {tab.label}
            </button>
          ))}
        </div>
      </div>

      {/* page mask */}
      <div className="pointer-events-none absolute inset-0 z-10 bg-black/50" />
    </div>
  )
}
